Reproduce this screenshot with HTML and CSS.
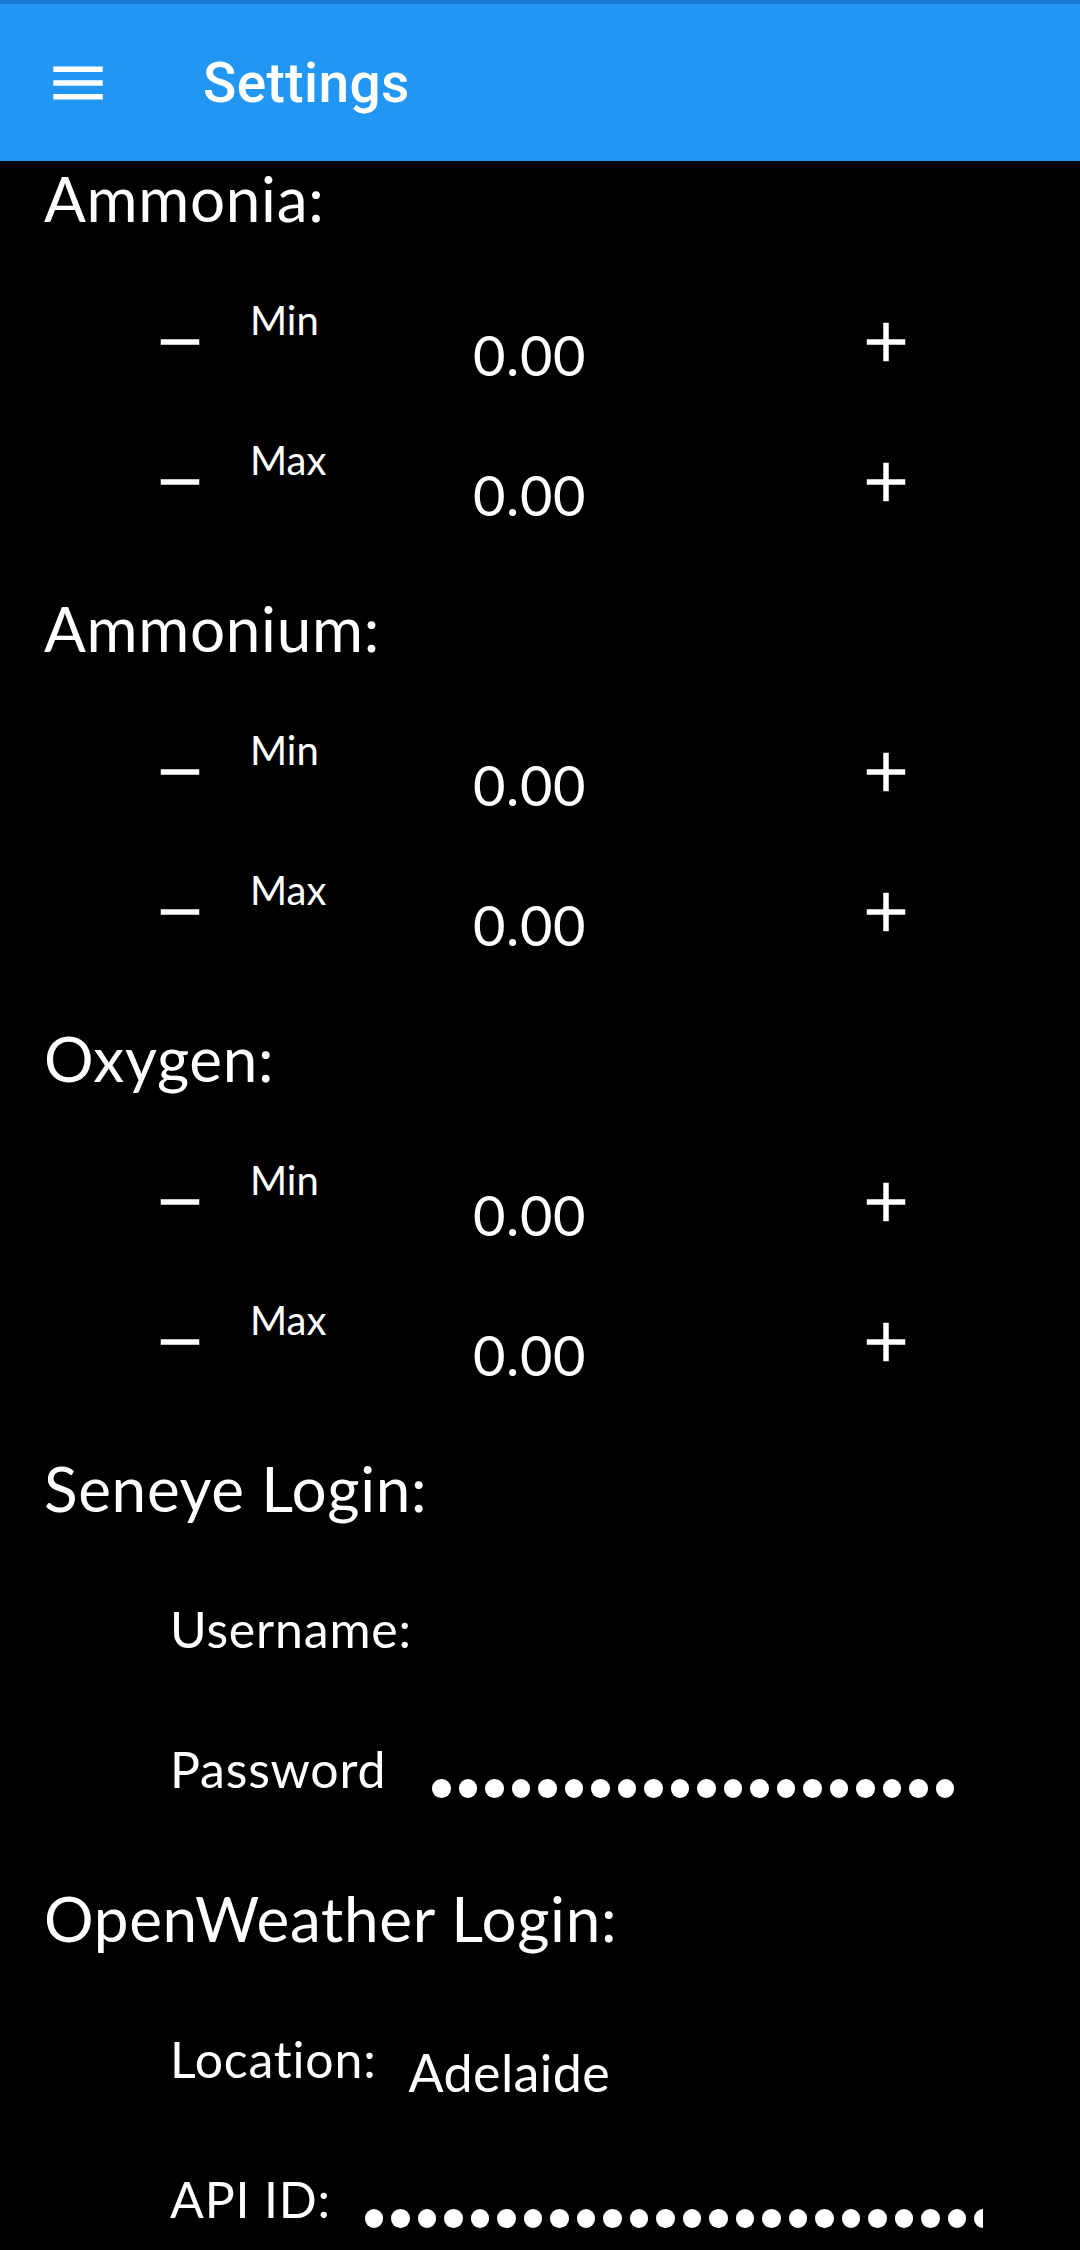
FILE: index.html
```html
<!DOCTYPE html>
<html lang="en">
<head>
<meta charset="utf-8">
<title>Settings</title>
<link rel="stylesheet" href="styles.css">
</head>
<body>
<header class="appbar">
  <button class="nav-btn" aria-label="Menu">
    <svg viewBox="0 0 24 24" width="66" height="66"><path fill="#fff" d="M3 18h18v-2H3v2zm0-5h18v-2H3v2zm0-7v2h18V6H3z"/></svg>
  </button>
  <h1 class="title">Settings</h1>
</header>

<main class="content">
  <section class="section">
    <h2 class="heading">Ammonia:</h2>
    <div class="row">
      <span class="icon-btn"><svg viewBox="0 0 24 24" width="66" height="66"><path fill="#fff" d="M19 13H5v-2h14v2z"/></svg></span>
      <span class="bound">Min</span>
      <span class="value">0.00</span>
      <span class="icon-btn"><svg viewBox="0 0 24 24" width="66" height="66"><path fill="#fff" d="M19 13h-6v6h-2v-6H5v-2h6V5h2v6h6v2z"/></svg></span>
    </div>
    <div class="row">
      <span class="icon-btn"><svg viewBox="0 0 24 24" width="66" height="66"><path fill="#fff" d="M19 13H5v-2h14v2z"/></svg></span>
      <span class="bound">Max</span>
      <span class="value">0.00</span>
      <span class="icon-btn"><svg viewBox="0 0 24 24" width="66" height="66"><path fill="#fff" d="M19 13h-6v6h-2v-6H5v-2h6V5h2v6h6v2z"/></svg></span>
    </div>
  </section>

  <section class="section">
    <h2 class="heading">Ammonium:</h2>
    <div class="row">
      <span class="icon-btn"><svg viewBox="0 0 24 24" width="66" height="66"><path fill="#fff" d="M19 13H5v-2h14v2z"/></svg></span>
      <span class="bound">Min</span>
      <span class="value">0.00</span>
      <span class="icon-btn"><svg viewBox="0 0 24 24" width="66" height="66"><path fill="#fff" d="M19 13h-6v6h-2v-6H5v-2h6V5h2v6h6v2z"/></svg></span>
    </div>
    <div class="row">
      <span class="icon-btn"><svg viewBox="0 0 24 24" width="66" height="66"><path fill="#fff" d="M19 13H5v-2h14v2z"/></svg></span>
      <span class="bound">Max</span>
      <span class="value">0.00</span>
      <span class="icon-btn"><svg viewBox="0 0 24 24" width="66" height="66"><path fill="#fff" d="M19 13h-6v6h-2v-6H5v-2h6V5h2v6h6v2z"/></svg></span>
    </div>
  </section>

  <section class="section">
    <h2 class="heading">Oxygen:</h2>
    <div class="row">
      <span class="icon-btn"><svg viewBox="0 0 24 24" width="66" height="66"><path fill="#fff" d="M19 13H5v-2h14v2z"/></svg></span>
      <span class="bound">Min</span>
      <span class="value">0.00</span>
      <span class="icon-btn"><svg viewBox="0 0 24 24" width="66" height="66"><path fill="#fff" d="M19 13h-6v6h-2v-6H5v-2h6V5h2v6h6v2z"/></svg></span>
    </div>
    <div class="row">
      <span class="icon-btn"><svg viewBox="0 0 24 24" width="66" height="66"><path fill="#fff" d="M19 13H5v-2h14v2z"/></svg></span>
      <span class="bound">Max</span>
      <span class="value">0.00</span>
      <span class="icon-btn"><svg viewBox="0 0 24 24" width="66" height="66"><path fill="#fff" d="M19 13h-6v6h-2v-6H5v-2h6V5h2v6h6v2z"/></svg></span>
    </div>
  </section>

  <section class="section">
    <h2 class="heading">Seneye Login:</h2>
    <div class="field">
      <span class="label">Username:</span>
    </div>
    <div class="field">
      <span class="label">Password</span>
      <span class="dots dots-pass" aria-label="masked password">
        <i></i><i></i><i></i><i></i><i></i><i></i><i></i><i></i><i></i><i></i>
        <i></i><i></i><i></i><i></i><i></i><i></i><i></i><i></i><i></i><i></i>
      </span>
    </div>
  </section>

  <section class="section">
    <h2 class="heading">OpenWeather Login:</h2>
    <div class="field">
      <span class="label">Location:</span>
      <span class="text-value">Adelaide</span>
    </div>
    <div class="field">
      <span class="label">API ID:</span>
      <span class="dots dots-api" aria-label="masked API id">
        <i></i><i></i><i></i><i></i><i></i><i></i><i></i><i></i><i></i><i></i>
        <i></i><i></i><i></i><i></i><i></i><i></i><i></i><i></i><i></i><i></i>
        <i></i><i></i><i></i><i></i><i></i>
      </span>
    </div>
  </section>
</main>
</body>
</html>
```

FILE: styles.css
```css
* { box-sizing: border-box; }

html, body {
  margin: 0;
  padding: 0;
  width: 1080px;
  height: 2250px;
  overflow: hidden;
  background: #000;
}

body {
  font-family: "Lato", "Noto Sans", sans-serif;
  color: #fff;
}

.appbar {
  height: 161px;
  background: #2196F3;
  border-top: 4px solid #1976D2;
  display: flex;
  align-items: center;
  padding-left: 45px;
}

.nav-btn {
  width: 66px;
  height: 66px;
  padding: 0;
  border: 0;
  background: transparent;
  display: flex;
}

.title {
  margin: 0 0 0 92px;
  font-family: "Roboto", sans-serif;
  font-weight: 500;
  font-size: 55px;
  line-height: 64px;
  color: #fff;
  letter-spacing: 0.4px;
}

.content {
  display: flex;
  flex-direction: column;
}

.section {
  height: 430px;
  display: flex;
  flex-direction: column;
}

.heading {
  margin: 0 0 36px 0;
  padding-left: 44px;
  font-weight: 400;
  font-size: 62px;
  line-height: 75px;
  height: 75px;
  letter-spacing: 0.7px;
  white-space: nowrap;
}

.row {
  height: 140px;
  display: grid;
  grid-template-columns: 66px 260px 1fr 66px;
  padding-left: 147px;
  padding-right: 161px;
}

.icon-btn {
  height: 140px;
  display: flex;
  align-items: center;
  justify-content: center;
}

.bound {
  padding-left: 37px;
  padding-top: 24px;
  font-size: 40px;
  line-height: 48px;
}

.value {
  padding-top: 50px;
  font-size: 56px;
  line-height: 66px;
  letter-spacing: 0.6px;
}

.field {
  height: 140px;
  display: flex;
  align-items: flex-start;
  padding-left: 170px;
}

.label {
  padding-top: 37px;
  font-size: 50px;
  line-height: 60px;
  letter-spacing: 0.8px;
  white-space: nowrap;
}

.text-value {
  margin-left: 32px;
  padding-top: 49px;
  font-size: 52px;
  line-height: 62px;
  letter-spacing: 0.4px;
}

.dots {
  display: flex;
  gap: 8px;
  margin-top: 77px;
  overflow: hidden;
}

.dots i {
  flex: none;
  width: 18.5px;
  height: 18.5px;
  border-radius: 50%;
  background: #fff;
}

.dots-pass { margin-left: 46px; }

.dots-api {
  margin-left: 34px;
  width: 618px;
}
```
